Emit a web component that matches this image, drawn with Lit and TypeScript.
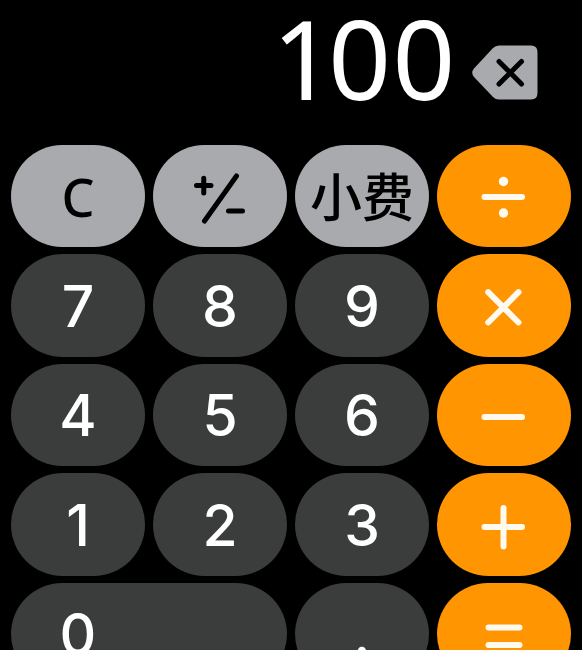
import { LitElement, html, css, svg, type TemplateResult } from "lit";
import { customElement, property } from "lit/decorators.js";
import { classMap } from "lit/directives/class-map.js";

type Kind = "digit" | "function" | "operator";

interface Key {
  label: string;
  kind: Kind;
  text?: string;
  icon?: TemplateResult;
  wide?: boolean;
}

const digit = (text: string, wide = false): Key => ({ label: text, kind: "digit", text, wide });

/* Every key icon is drawn on a 60 x 60 board centred in its key. */
const signIcon = svg`
  <path class="thin" d="M6.500 18.500H21M13.750 11.250V26M38.500 44H52.500"/>
  <path class="thin" d="M46.500 9L14.500 54"/>`;
const divideIcon = svg`
  <path d="M10.500 30H48"/>
  <circle cx="29.500" cy="14.500" r="4.700"/><circle cx="29.500" cy="46" r="4.700"/>`;
const timesIcon = svg`<path d="M14.200 15.200L44.500 45.500M44.500 15.200L14.200 45.500"/>`;
const minusIcon = svg`<path d="M10.500 31H48"/>`;
const plusIcon = svg`<path d="M10.500 31H48M29.500 12V50.500"/>`;
const equalsIcon = svg`<path d="M14.500 22.500H45.500M14.500 40H45.500"/>`;

const KEYS: Key[] = [
  { label: "C", kind: "function", text: "C" },
  { label: "+/−", kind: "function", icon: signIcon },
  { label: "小费", kind: "function", text: "小费" },
  { label: "÷", kind: "operator", icon: divideIcon },
  digit("7"), digit("8"), digit("9"),
  { label: "×", kind: "operator", icon: timesIcon },
  digit("4"), digit("5"), digit("6"),
  { label: "−", kind: "operator", icon: minusIcon },
  digit("1"), digit("2"), digit("3"),
  { label: "+", kind: "operator", icon: plusIcon },
  digit("0", true), digit("."),
  { label: "=", kind: "operator", icon: equalsIcon },
];

@customElement("calc-display")
export class CalcDisplay extends LitElement {
  @property() value = "0";

  static styles = css`
    :host {
      display: flex;
      justify-content: flex-end;
      align-items: baseline;
      gap: 16px;
      box-sizing: border-box;
      height: 145px;
      padding: 0 44px 0 12px;
    }
    .value {
      color: #fff;
      font: 400 110px/114px "Noto Sans", "Liberation Sans", sans-serif;
      font-variant-numeric: proportional-nums;
    }
    .erase {
      border: 0;
      padding: 0;
      background: none;
      color: #a9aaad;
      cursor: pointer;
    }
    .shape {
      display: inline-block;
      width: 66px;
      height: 55px;
      vertical-align: baseline;
    }
    .cross {
      fill: none;
      stroke: #000;
      stroke-width: 5;
      stroke-linecap: round;
    }
  `;

  render() {
    return html`
      <output class="value">${this.value}</output>
      <button class="erase" type="button" aria-label="删除">
        <svg class="shape" viewBox="0 0 66 55" aria-hidden="true">
          <path fill="currentColor"
            d="M27 0.500H59Q65.500 0.500 65.500 7V48Q65.500 54.500 59 54.500H27Q23.500 54.500 21 52L2 32Q-1.500 27.800 2 23.500L21 3Q23.500 0.500 27 0.500Z"/>
          <path class="cross" d="M27 16.500L49.500 39M49.500 16.500L27 39"/>
        </svg>
      </button>
    `;
  }
}

@customElement("app-root")
export class AppRoot extends LitElement {
  static styles = css`
    :host {
      display: block;
      height: 100vh;
      overflow: hidden;
      background: #000;
    }
    .keys {
      display: grid;
      grid-template-columns: repeat(4, 1fr);
      gap: 7px 8px;
      padding: 0 11px 12px;
    }
    .key {
      display: flex;
      align-items: center;
      justify-content: center;
      box-sizing: border-box;
      min-width: 0;
      aspect-ratio: 17 / 13;
      margin: 0;
      border: 0;
      padding: 2px 0 0;
      border-radius: 999px;
      font: 500 57px/60px Inter, sans-serif;
      white-space: nowrap;
      cursor: pointer;
    }
    .digit {
      background: #3b3c3c;
      color: #fff;
    }
    .function {
      background: #a9aaad;
      color: #000;
      font: 500 52px/60px "Noto Sans", "Noto Sans CJK SC", sans-serif;
    }
    .operator {
      background: #ff9500;
      color: #fffaf0;
    }
    .wide {
      grid-column: span 2;
      aspect-ratio: auto;
      padding-right: calc(50% + 4px);
    }
    .icon {
      width: 60px;
      height: 60px;
      fill: none;
      stroke: currentColor;
      stroke-width: 6;
      stroke-linecap: round;
    }
    .icon circle {
      fill: currentColor;
      stroke: none;
    }
    .icon .thin {
      stroke-width: 5;
    }
  `;

  private renderKey(key: Key) {
    const classes = { key: true, [key.kind]: true, wide: !!key.wide };
    return html`
      <button type="button" class=${classMap(classes)} aria-label=${key.label}>
        ${key.icon
          ? html`<svg class="icon" viewBox="0 0 60 60" aria-hidden="true">${key.icon}</svg>`
          : key.text}
      </button>
    `;
  }

  render() {
    return html`
      <calc-display value="100"></calc-display>
      <main class="keys">${KEYS.map((key) => this.renderKey(key))}</main>
    `;
  }
}
